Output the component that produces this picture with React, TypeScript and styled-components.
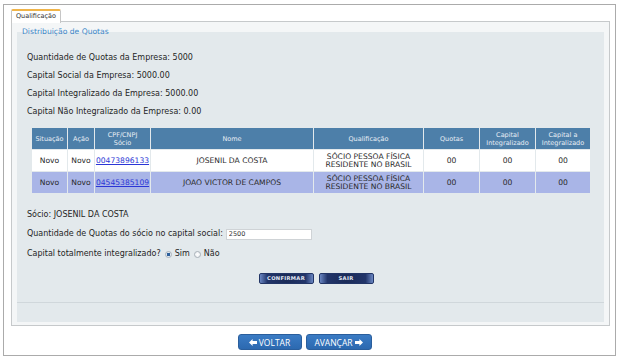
import React from "react";
import styled, { createGlobalStyle } from "styled-components";

const GlobalStyle = createGlobalStyle`
  html, body { margin: 0; padding: 0; background: #ffffff; }
  body { font-family: "DejaVu Sans", Verdana, sans-serif; color: #1f1f1f; }
  * { box-sizing: border-box; }
`;

const Page = styled.div`
  width: 620px;
  height: 360px;
  padding: 4px 0 0 3px;
`;

const Frame = styled.div`
  width: 613px;
  height: 352px;
  border: 1px solid #ababab;
  padding: 4px 4px 0 7px;
  display: flex;
  flex-direction: column;
`;

const TabBar = styled.div`
  display: flex;
  height: 13px;
  position: relative;
  z-index: 1;
  margin-bottom: -1px;
`;

const Tab = styled.div`
  width: 50px;
  height: 14px;
  background: #ffffff;
  border: 1px solid #c6c6c6;
  border-top: 2px solid #f0b449;
  border-bottom: none;
  border-radius: 2px 2px 0 0;
  font-size: 6.5px;
  line-height: 10px;
  text-align: center;
  color: #333;
`;

const Panel = styled.div`
  width: 599px;
  height: 305px;
  border: 1px solid #c6c9cb;
  background: #f4f6f7;
  padding: 5px 5px 3px 5px;
  display: flex;
  flex-direction: column;
`;

const Fieldset = styled.fieldset`
  margin: 0;
  padding: 0 10px;
  border: none;
  background: #e3e9ec;
  flex: 1;
  min-inline-size: 0;
  display: flex;
  flex-direction: column;
`;

const Legend = styled.legend`
  padding: 0;
  margin-left: -5px;
  font-size: 7.6px;
  line-height: 10px;
  color: #3a86c8;
`;

const InfoBlock = styled.div`
  padding-top: 12px;
`;

const Line = styled.div<{ $h?: number }>`
  font-size: 8px;
  line-height: ${(p) => p.$h ?? 18}px;
  height: ${(p) => p.$h ?? 18}px;
  display: flex;
  align-items: center;
  white-space: nowrap;
`;

const Table = styled.table`
  margin: 6px 4px 0 4px;
  width: 558px;
  table-layout: fixed;
  border-collapse: separate;
  border-spacing: 1px;
`;

const Th = styled.th`
  background: #4d7fa9;
  color: #e8eef5;
  font-weight: normal;
  font-size: 6.5px;
  line-height: 8px;
  height: 21px;
  padding: 0;
  text-align: center;
`;

const Tr = styled.tr<{ $alt?: boolean }>`
  background: ${(p) => (p.$alt ? "#a9b5e7" : "#ffffff")};
`;

const Td = styled.td`
  font-size: 7.6px;
  line-height: 8px;
  height: 21px;
  padding: 0;
  text-align: center;
  color: #2a2a2a;
  white-space: nowrap;
`;

const Link = styled.a`
  color: #2b36d6;
  text-decoration: underline;
`;

const Section = styled.div`
  margin-top: 11px;
`;

const Input = styled.input`
  width: 86px;
  height: 11px;
  margin-left: 3px;
  border: 1px solid #cfd3d6;
  background: #ffffff;
  font-family: "DejaVu Sans", sans-serif;
  font-size: 6.5px;
  color: #333;
  padding: 0 2px;
  outline: none;
`;

const RadioLabel = styled.label`
  display: inline-flex;
  align-items: center;
  margin-left: 4px;
  gap: 3px;
`;

const Radio = styled.span<{ $on?: boolean }>`
  width: 7px;
  height: 7px;
  border-radius: 50%;
  border: 1px solid #a9b1b8;
  background: ${(p) =>
    p.$on
      ? "radial-gradient(circle, #2d5f9a 0 1.6px, #dfe8f2 2px)"
      : "radial-gradient(circle, #ffffff 0, #e6eaee 100%)"};
`;

const ActionRow = styled.div`
  margin-top: 9px;
  display: flex;
  justify-content: center;
  gap: 5px;
  padding-left: 11px;
`;

const DarkButton = styled.button`
  width: 55px;
  height: 11px;
  padding: 0;
  border: 1px solid #223566;
  border-radius: 2px;
  background: linear-gradient(90deg, #6a86c2 0%, #22356a 14%, #1b2b58 50%, #22356a 86%, #6a86c2 100%);
  color: #e4eaf5;
  font-family: "DejaVu Sans", sans-serif;
  font-weight: bold;
  font-size: 5.2px;
  letter-spacing: 0.3px;
  line-height: 9px;
`;

const Separator = styled.div`
  margin-top: 18px;
  border-top: 1px solid #d0d7db;
  margin-left: -10px;
  margin-right: -10px;
`;

const Nav = styled.div`
  margin-top: 8px;
  display: flex;
  justify-content: center;
  gap: 4px;
  padding-right: 13px;
`;

const NavButton = styled.button<{ $w: number }>`
  width: ${(p) => p.$w}px;
  height: 16px;
  padding: 0;
  border: 1px solid #2a5e9c;
  border-radius: 3px;
  background: linear-gradient(#3a7bc4, #2c69b0);
  color: #ffffff;
  font-family: "Open Sans", sans-serif;
  font-weight: normal;
  font-size: 8.5px;
  display: flex;
  align-items: center;
  justify-content: center;
  gap: 2px;
`;

const Arrow = ({ dir }: { dir: "left" | "right" }) => (
  <svg width="8" height="7" viewBox="0 0 8 7">
    {dir === "left" ? (
      <path d="M0 3.5 L3.6 0 V2 H8 V5 H3.6 V7 Z" fill="#ffffff" />
    ) : (
      <path d="M8 3.5 L4.4 0 V2 H0 V5 H4.4 V7 Z" fill="#ffffff" />
    )}
  </svg>
);

const cols = [35, 26, 55, 162, 109, 55, 55, 54];

const rows = [
  { cpf: "00473896133", nome: "JOSENIL DA COSTA" },
  { cpf: "04545385109", nome: "JOAO VICTOR DE CAMPOS" },
];

export default function App() {
  return (
    <>
      <GlobalStyle />
      <Page>
        <Frame>
          <TabBar>
            <Tab>Qualificação</Tab>
          </TabBar>
          <Panel>
            <Fieldset>
              <Legend>Distribuição de Quotas</Legend>
              <InfoBlock>
                <Line>Quantidade de Quotas da Empresa: 5000</Line>
                <Line>Capital Social da Empresa: 5000.00</Line>
                <Line>Capital Integralizado da Empresa: 5000.00</Line>
                <Line>Capital Não Integralizado da Empresa: 0.00</Line>
              </InfoBlock>
              <Table>
                <colgroup>
                  {cols.map((w, i) => (
                    <col key={i} style={{ width: w }} />
                  ))}
                </colgroup>
                <thead>
                  <tr>
                    <Th>Situação</Th>
                    <Th>Ação</Th>
                    <Th>
                      CPF/CNPJ
                      <br />
                      Sócio
                    </Th>
                    <Th>Nome</Th>
                    <Th>Qualificação</Th>
                    <Th>Quotas</Th>
                    <Th>
                      Capital
                      <br />
                      Integralizado
                    </Th>
                    <Th>
                      Capital a
                      <br />
                      Integralizado
                    </Th>
                  </tr>
                </thead>
                <tbody>
                  {rows.map((r, i) => (
                    <Tr key={r.cpf} $alt={i === 1}>
                      <Td>Novo</Td>
                      <Td>Novo</Td>
                      <Td>
                        <Link href="#">{r.cpf}</Link>
                      </Td>
                      <Td>{r.nome}</Td>
                      <Td>
                        SÓCIO PESSOA FÍSICA
                        <br />
                        RESIDENTE NO BRASIL
                      </Td>
                      <Td>00</Td>
                      <Td>00</Td>
                      <Td>00</Td>
                    </Tr>
                  ))}
                </tbody>
              </Table>
              <Section>
                <Line $h={19}>Sócio: JOSENIL DA COSTA</Line>
                <Line $h={20}>
                  Quantidade de Quotas do sócio no capital social:
                  <Input defaultValue="2500" />
                </Line>
                <Line $h={20}>
                  Capital totalmente integralizado?
                  <RadioLabel>
                    <Radio $on />
                    Sim
                  </RadioLabel>
                  <RadioLabel>
                    <Radio />
                    Não
                  </RadioLabel>
                </Line>
              </Section>
              <ActionRow>
                <DarkButton>CONFIRMAR</DarkButton>
                <DarkButton>SAIR</DarkButton>
              </ActionRow>
              <Separator />
            </Fieldset>
          </Panel>
          <Nav>
            <NavButton $w={64}>
              <Arrow dir="left" />
              VOLTAR
            </NavButton>
            <NavButton $w={66}>
              AVANÇAR
              <Arrow dir="right" />
            </NavButton>
          </Nav>
        </Frame>
      </Page>
    </>
  );
}
